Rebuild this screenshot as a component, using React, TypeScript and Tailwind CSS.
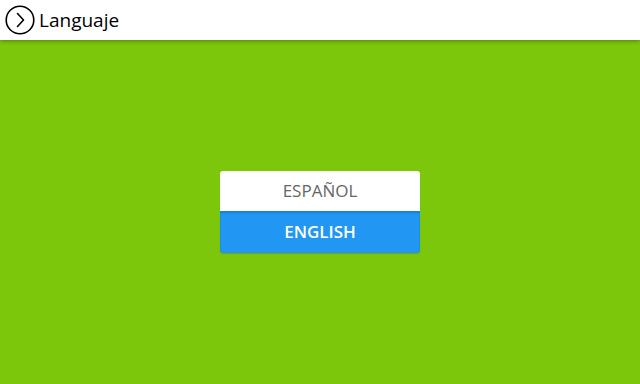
import React from "react";

export default function App() {
  return (
    <div className="w-[640px] h-[384px] bg-[#7cc60c] flex flex-col overflow-hidden" style={{ fontFamily: "'Open Sans', 'Liberation Sans', sans-serif" }}>
      <div className="h-[40px] bg-white flex items-center px-[5px] gap-[4px] shadow-[0_1px_4px_rgba(0,0,0,0.35)] relative z-10 shrink-0">
        <svg width="30" height="30" viewBox="0 0 30 30">
          <circle cx="15" cy="15" r="13.8" fill="none" stroke="#000" strokeWidth="1.6" />
          <path d="M12.5 8.5 L18.5 15 L12.5 21.5" fill="none" stroke="#000" strokeWidth="1.6" strokeLinecap="round" strokeLinejoin="round" />
        </svg>
        <span className="text-[19px] text-black leading-none">Languaje</span>
      </div>
      <div className="flex-1 flex items-center justify-center">
        <div className="w-[200px] rounded-[3px] overflow-hidden flex flex-col shadow-[0_1px_1px_rgba(0,0,0,0.15)]">
          <div className="h-[40px] bg-white flex items-center justify-center text-[17px] font-medium text-[#666666]">ESPAÑOL</div>
          <div className="h-[42px] bg-[#2196f3] flex items-center justify-center text-[17px] font-semibold text-white shadow-[inset_0_2px_2px_rgba(0,0,0,0.15)]">ENGLISH</div>
        </div>
      </div>
    </div>
  );
}
